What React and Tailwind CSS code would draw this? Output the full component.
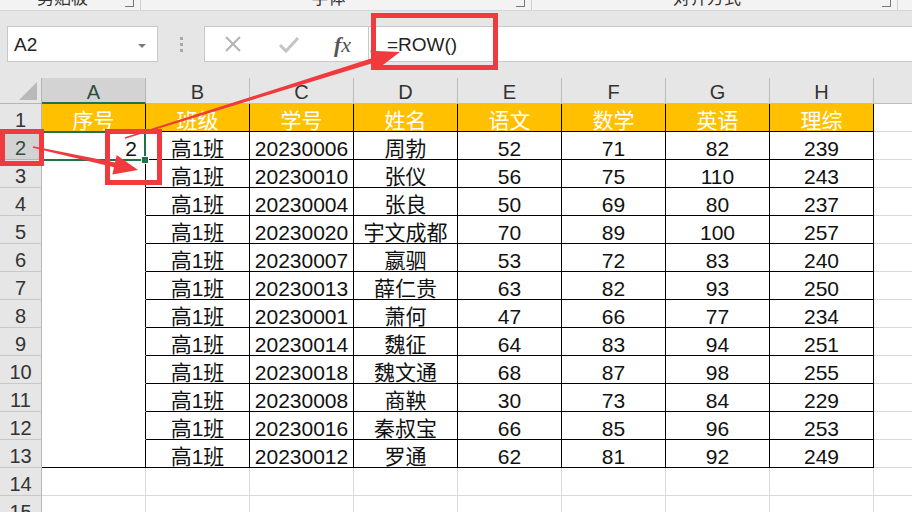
import React from "react";

const FONT = { fontFamily: '"Liberation Sans", "Noto Sans CJK SC", sans-serif' };

const COLS = ["A", "B", "C", "D", "E", "F", "G", "H", "I"];
const HEAD = ["序号", "班级", "学号", "姓名", "语文", "数学", "英语", "理综"];
const ROWS = [
  ["20230006", "周勃", 52, 71, 82, 239],
  ["20230010", "张仪", 56, 75, 110, 243],
  ["20230004", "张良", 50, 69, 80, 237],
  ["20230020", "宇文成都", 70, 89, 100, 257],
  ["20230007", "嬴驷", 53, 72, 83, 240],
  ["20230013", "薛仁贵", 63, 82, 93, 250],
  ["20230001", "萧何", 47, 66, 77, 234],
  ["20230014", "魏征", 64, 83, 94, 251],
  ["20230018", "魏文通", 68, 87, 98, 255],
  ["20230008", "商鞅", 30, 73, 84, 229],
  ["20230016", "秦叔宝", 66, 85, 96, 253],
  ["20230012", "罗通", 62, 81, 92, 249],
];

function arrowPoints(x1, y1, x2, y2, w1, w2, hl, hw) {
  const dx = x2 - x1;
  const dy = y2 - y1;
  const len = Math.hypot(dx, dy);
  const ux = dx / len;
  const uy = dy / len;
  const px = -uy;
  const py = ux;
  const bx = x2 - ux * hl;
  const by = y2 - uy * hl;
  const pts = [
    [x1 + (px * w1) / 2, y1 + (py * w1) / 2],
    [bx + (px * w2) / 2, by + (py * w2) / 2],
    [bx + px * hw, by + py * hw],
    [x2, y2],
    [bx - px * hw, by - py * hw],
    [bx - (px * w2) / 2, by - (py * w2) / 2],
    [x1 - (px * w1) / 2, y1 - (py * w1) / 2],
  ];
  return pts.map((p) => p[0].toFixed(1) + "," + p[1].toFixed(1)).join(" ");
}

function cellText(r, c) {
  if (r === 1 && c < 8) return HEAD[c];
  if (r >= 2 && r <= 13) {
    if (c === 0) return r === 2 ? "2" : "";
    if (c === 1) return "高1班";
    if (c <= 7) return String(ROWS[r - 2][c - 2]);
  }
  return "";
}

function cellClass(r, c) {
  let cls = "relative h-[28px] flex items-center pt-[6px] border-r border-b ";
  if (r <= 13 && c <= 7) {
    cls += "border-r-black ";
    if (c === 0 && r >= 2 && r <= 12) cls += "border-b-white ";
    else cls += "border-b-black ";
  } else {
    cls += "border-[#d9d9d9] ";
  }
  if (r === 1 && c < 8) cls += "bg-[#ffc000] text-white justify-center ";
  else if (r === 2 && c === 0) cls += "bg-white justify-end pr-[8px] text-[#111] ";
  else cls += "bg-white justify-center text-[#111] ";
  return cls;
}

function RibbonLabel({ label, width }) {
  return (
    <div className="flex items-start h-full" style={{ width }}>
      <div className="flex-1 text-center text-[17px] leading-[18px] -mt-[10px] text-[#333]">{label}</div>
      <div className="w-[9px] h-[7px] border-r border-b border-[#777] mr-[6px]" />
      <div className="w-px h-full bg-[#d0d0d0]" />
    </div>
  );
}

export default function App() {
  const rows = [];
  for (let r = 1; r <= 15; r++) rows.push(r);

  return (
    <div className="relative w-[912px] h-[512px] overflow-hidden bg-white" style={FONT}>
      {/* ribbon remnants */}
      <div className="h-[11px] bg-[#f3f3f3] border-b border-[#d6d6d6] flex overflow-hidden">
        <RibbonLabel label="剪贴板" width={141} />
        <RibbonLabel label="字体" width={391} />
        <RibbonLabel label="对齐方式" width={366} />
      </div>

      {/* formula bar */}
      <div className="h-[67px] bg-[#e6e6e6] pt-[15px] flex items-start">
        <div className="ml-[7px] w-[151px] h-[36px] bg-white border border-[#c8c8c8] flex items-center justify-between px-[6px] pt-[3px]">
          <span className="text-[19px] text-[#222]">A2</span>
          <svg width="10" height="6" viewBox="0 0 10 6" className="mr-[4px]">
            <path d="M1 1 L9 1 L5 5 Z" fill="#7a7a7a" />
          </svg>
        </div>
        <div className="w-[46px] h-[36px] flex flex-col items-center justify-center gap-[3px]">
          <div className="w-[3px] h-[3px] bg-[#a8a8a8]" />
          <div className="w-[3px] h-[3px] bg-[#a8a8a8]" />
          <div className="w-[3px] h-[3px] bg-[#a8a8a8]" />
        </div>
        <div className="w-[165px] h-[36px] bg-white border border-[#c8c8c8] flex items-center">
          <svg width="20" height="20" viewBox="0 0 20 20" className="ml-[18px]">
            <path d="M3 3 L17 17 M17 3 L3 17" stroke="#b3b3b3" strokeWidth="2" />
          </svg>
          <svg width="22" height="20" viewBox="0 0 22 20" className="ml-[35px]">
            <path d="M2 11 L8 17 L20 4" stroke="#c4c4c4" strokeWidth="3" fill="none" />
          </svg>
          <span className="ml-[34px] text-[22px] italic text-[#555]" style={{ fontFamily: '"Liberation Serif", serif' }}>
            <span className="font-bold">f</span>x
          </span>
        </div>
        <div className="flex-1 h-[36px] bg-white border-y border-[#c8c8c8] flex items-center pl-[18px] pt-[3px]">
          <span className="text-[19px] text-[#222]">=ROW()</span>
        </div>
      </div>

      {/* sheet grid */}
      <div className="grid grid-cols-[42px_repeat(9,104px)] w-[978px]">
        <div className="h-[26px] bg-[#e6e6e6] border-r border-b border-[#b5b5b5] relative">
          <svg width="22" height="20" viewBox="0 0 22 20" className="absolute right-[2px] bottom-[2px]">
            <path d="M20 1 L20 19 L2 19 Z" fill="#b9b9b9" />
          </svg>
        </div>
        {COLS.map((c, i) => (
          <div
            key={c}
            className={
              i === 0
                ? "h-[26px] bg-[#d3d3d3] border-r border-[#b5b5b5] border-b-2 border-b-[#217346] flex items-center justify-center pt-[3px] text-[20px] text-[#2c4f3a]"
                : "h-[26px] bg-[#e6e6e6] border-r border-b border-[#bdbdbd] flex items-center justify-center pt-[3px] text-[20px] text-[#333]"
            }
          >
            {c}
          </div>
        ))}

        {rows.map((r) => (
          <React.Fragment key={r}>
            <div
              className={
                r === 2
                  ? "h-[28px] bg-[#d3d3d3] border-r border-b border-[#b5b5b5] flex items-center justify-center pt-[5px] text-[20px] text-[#2c4f3a]"
                  : "h-[28px] bg-[#e6e6e6] border-r border-b border-[#c9c9c9] border-r-[#b5b5b5] flex items-center justify-center pt-[5px] text-[20px] text-[#333]"
              }
            >
              {r}
            </div>
            {COLS.map((c, ci) => (
              <div key={c} className={cellClass(r, ci) + "text-[21px]"}>
                {cellText(r, ci)}
                {r === 2 && ci === 0 && (
                  <div className="absolute -left-px -top-px w-[105px] h-[30px] border-2 border-[#217346] z-10">
                    <div className="absolute -right-[5px] -bottom-[5px] w-[8px] h-[8px] bg-[#217346] border border-white" />
                  </div>
                )}
              </div>
            ))}
          </React.Fragment>
        ))}
      </div>

      {/* red annotations */}
      <svg className="absolute left-0 top-0 pointer-events-none z-20" width="912" height="512" viewBox="0 0 912 512">
        <rect x="373.5" y="15.5" width="122" height="52" fill="none" stroke="#f03a3d" strokeWidth="5" />
        <rect x="2.5" y="131.5" width="39" height="32" fill="none" stroke="#f03a3d" strokeWidth="5" />
        <rect x="107.5" y="131.5" width="52" height="51" fill="none" stroke="#f03a3d" strokeWidth="5" />
        <polygon points={arrowPoints(33, 147, 138, 170, 1.5, 5, 24, 10)} fill="#f03a3d" />
        <polygon points={arrowPoints(125, 138, 400, 52, 1.5, 5, 28, 10)} fill="#f03a3d" />
      </svg>
    </div>
  );
}
